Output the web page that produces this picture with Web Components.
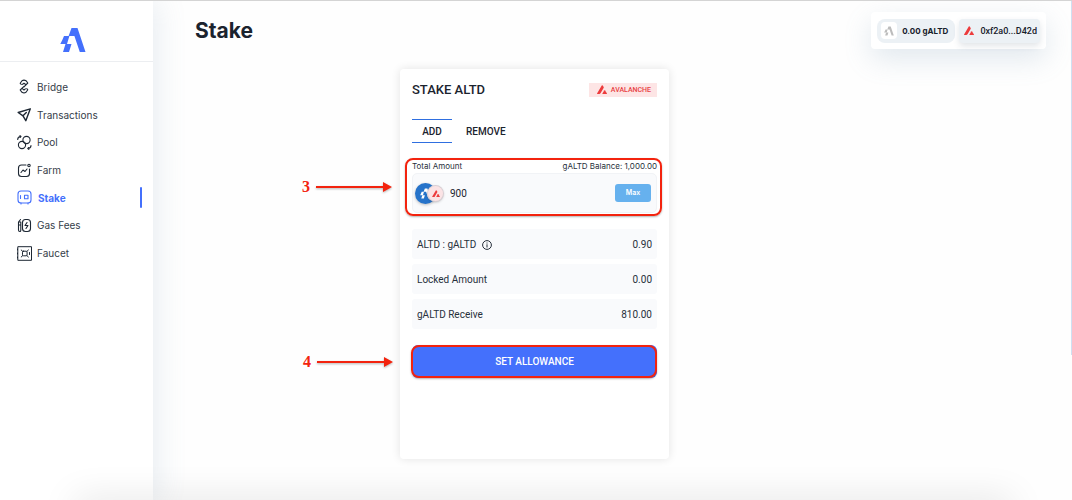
<!DOCTYPE html>
<html lang="en">
<head>
<meta charset="utf-8">
<meta name="viewport" content="width=device-width, initial-scale=1">
<title>Stake</title>
<style>
  html, body { margin: 0; background: #fefefe; }
  body { font-family: Inter, "Open Sans", sans-serif; color: #1b232e; }
</style>
</head>
<body>
<stake-app></stake-app>

<script>
const define = (name, html) => {
  const template = document.createElement('template');
  template.innerHTML = html;
  customElements.define(name, class extends HTMLElement {
    constructor() {
      super();
      this.attachShadow({ mode: 'open' }).append(template.content.cloneNode(true));
    }
  });
};

define('brand-mark', `
  <style>
    :host { display: block; width: 26px; height: 26px; color: #4470fc; }
    svg { display: block; width: 100%; height: 100%; }
  </style>
  <svg viewBox="0 0 26 26" fill="currentColor" aria-hidden="true">
    <path d="M11.500 1H17.500L25.500 25H19.800L14.400 9H8.600Z"/>
    <path d="M4 9H9.400L7 17H.3L2.300 13Z"/>
    <path d="M5.500 17H11.500L9 25H3Z"/>
  </svg>`);

define('avax-mark', `
  <style>
    :host { display: block; width: 10px; height: 9px; color: #ed3b3c; }
    svg { display: block; width: 100%; height: 100%; }
  </style>
  <svg viewBox="0 0 20 18" fill="currentColor" aria-hidden="true">
    <path d="M9.500 1Q10.500 0 11.500 1L13.300 4Q13.800 5 13.200 6L7 16.500Q6.200 18 4.500 18H1Q-.5 18 .4 16.500Z"/>
    <path d="M14.500 10.800Q15.300 9.700 16.100 10.800L19.700 16.700Q20.300 18 19 18H11.700Q10.300 18 11 16.700Z"/>
  </svg>`);

define('nav-item', `
  <style>
    :host { display: flex; flex: 1; }
    a { display: flex; flex: 1; align-items: center; gap: 5px; margin-right: 11px; padding-left: 17px;
        color: #353d49; font-size: 10px; line-height: 20px; text-decoration: none; }
    ::slotted(svg) { width: 15px; height: 15px; color: #1d2733; }
    :host([active]) a { color: #4470fc; font-weight: 700; gap: 6px; }
    :host([active]) ::slotted(svg) { color: #4470fc; }
    :host([active]) a::after { content: ""; width: 2px; height: 21px; margin-left: auto; background: #4470fc; border-radius: 1px; }
  </style>
  <a href="#"><slot name="icon"></slot><span><slot></slot></span></a>`);

define('side-bar', `
  <style>
    :host { display: block; background: #fff; box-shadow: 4px 0 28px rgba(110,145,175,.16); }
    .brand { display: flex; justify-content: center; padding: 26px 7px 8px 0; border-bottom: 1px solid #eceef1; }
    nav { display: flex; flex-direction: column; height: 194px; margin-top: 11px; }
    svg { fill: none; stroke: currentColor; stroke-width: 1.1; stroke-linecap: round; stroke-linejoin: round; }
  </style>
  <div class="brand"><brand-mark></brand-mark></div>
  <nav aria-label="Main">
    <nav-item>Bridge
      <svg slot="icon" viewBox="0 0 15 15"><path d="M4.300 5.500L3.200 4.300L5 1.700Q7 .5 9 1.700L10.800 4L7 7.800M5.600 5.300L7 4.200L8.400 5.300M7 7.300L3.200 11L5 13.300Q7 14.500 9 13.300L10.800 10.800L9.800 9.600M5.600 9.800L7 11L8.400 9.800"/></svg>
    </nav-item>
    <nav-item>Transactions
      <svg slot="icon" viewBox="0 0 15 15"><path stroke-width="1.400" d="M13.300 1.800L1.200 5.500L6 8.800L8.800 13.700Z M6 8.800L9.300 5.500"/></svg>
    </nav-item>
    <nav-item>Pool
      <svg slot="icon" viewBox="0 0 15 15"><circle cx="9.500" cy="5" r="3.600"/><circle cx="5" cy="10" r="3.600"/><path d="M.7 4.500Q.7 1.700 3.700 1.500M3 .7L4 1.500L3.200 2.500M14 10.500Q14 13.300 11 13.500M11.800 12.500L10.800 13.500L11.800 14.300"/></svg>
    </nav-item>
    <nav-item>Farm
      <svg slot="icon" viewBox="0 0 15 15"><path d="M9 2H4.500Q1.500 2 1.500 5V10.500Q1.500 13.500 4.500 13.500H9.500Q12.500 13.500 12.500 10.500V6M4 9.500L6 7L8 8.500L10 6"/><circle cx="12" cy="2.500" r="1.200"/></svg>
    </nav-item>
    <nav-item active>Stake
      <svg slot="icon" viewBox="0 0 15 15"><rect x="1" y="1" width="13" height="12" rx="3"/><path d="M3.500 5.500V8.500M4 13V14M11 13V14"/><rect x="7.500" y="5.300" width="3.500" height="3.500"/></svg>
    </nav-item>
    <nav-item>Gas Fees
      <svg slot="icon" viewBox="0 0 15 15"><rect x="5.500" y="1.500" width="8" height="12" rx="3"/><path d="M10 4.500L8 7.500H11L9 10.500M3.500 1.500L1.500 4V7H3.800V4H1.500M1.500 7V12Q1.500 13.500 2.700 13.500T3.800 12V7"/></svg>
    </nav-item>
    <nav-item>Faucet
      <svg slot="icon" viewBox="0 0 15 15"><g stroke-width="1"><rect x="1.200" y=".7" width="13.300" height="13.600"/><rect x="5.500" y="5.200" width="4.600" height="4.600" rx="1"/><path d="M.5 3V4M.5 7V8M.5 11V12M4.200 4L5.700 5.400M11.400 4L9.900 5.400M4.200 11L5.700 9.600M11.400 11L9.900 9.600M12.500 6.500V8.500"/></g></svg>
    </nav-item>
  </nav>`);

define('wallet-bar', `
  <style>
    :host { display: flex; align-items: center; gap: 4px; padding: 6px; box-sizing: border-box; height: 37px;
            background: #fff; border-radius: 4px; box-shadow: 0 10px 28px rgba(110,145,175,.2); }
    button { display: flex; align-items: center; box-sizing: border-box; height: 24px; border: 0; margin: 0;
             background: #ecf1f5; color: #17202b; line-height: 16px; white-space: nowrap; }
    .balance { gap: 5px; padding: 0 7px 0 4px; border-radius: 8px; font-family: Inter, sans-serif; font-size: 8px; font-weight: 700; }
    .tile { display: grid; place-items: center; width: 16px; height: 17px; background: #fff; border-radius: 4px; }
    .tile brand-mark { width: 10px; height: 10px; color: #bcbcbc; }
    .account { gap: 6px; padding: 0 3px 0 5px; border-radius: 4px; font-family: Roboto, sans-serif; font-size: 9px; font-weight: 500; box-shadow: 0 3px 6px rgba(60,80,100,.15); }
  </style>
  <button class="balance" type="button"><span class="tile"><brand-mark></brand-mark></span>0.00 gALTD</button>
  <button class="account" type="button"><avax-mark></avax-mark>0xf2a0...D42d</button>`);

define('info-row', `
  <style>
    :host { display: flex; align-items: center; justify-content: space-between; box-sizing: border-box; height: 30px; padding: 1px 5px 0;
            background: #f9fafc; border-radius: 3px; font: 400 10px/16px Roboto, sans-serif; color: #27303b; }
    .label { display: flex; align-items: center; gap: 6px; }
  </style>
  <span class="label"><slot></slot></span><span><slot name="value"></slot></span>`);

define('step-marker', `
  <style>
    :host { position: absolute; z-index: 1; border: 2px solid #f3230e; border-radius: 8px;
            box-shadow: 0 1px 2px rgba(0,0,0,.3); pointer-events: none; }
    .lead { position: absolute; right: calc(100% + var(--lead-gap, 15px)); top: 50%; transform: translateY(-50%);
            display: flex; align-items: center; gap: 6px; color: #f3230e;
            font: 700 16px/20px "Liberation Serif", serif; }
    svg { display: block; width: 76px; height: 10px; filter: drop-shadow(0 1px 1px rgba(0,0,0,.3)); }
  </style>
  <div class="lead"><slot></slot>
    <svg viewBox="0 0 76 10" fill="currentColor" aria-hidden="true"><path d="M0 4H67V0L76 5L67 10V6H0Z"/></svg>
  </div>`);

define('stake-card', `
  <style>
    :host { display: block; box-sizing: border-box; min-height: 390px; padding: 12px; background: #fff;
            border-radius: 4px; box-shadow: 0 0 10px rgba(0,0,0,.11); }
    header { display: flex; align-items: center; justify-content: space-between; height: 17px; }
    h2 { margin: 0; font: 500 13px/16px Roboto, sans-serif; }
    .chain { display: flex; align-items: center; gap: 4px; height: 14px; padding: 0 6px 0 8px; background: #fde5e5;
             color: #e84142; font: 500 7px/14px Roboto, sans-serif; }
    .tabs { display: flex; gap: 14px; height: 24px; margin-top: 21px; }
    .tabs button { padding: 1px 0 0; border: 0; background: none; color: #1b232e; font: 500 10px/16px Roboto, sans-serif; }
    .tabs .on { width: 40px; border: solid #2f6fe0; border-width: 1px 0; }
    .stake, .submit { position: relative; }
    .stake { margin-top: 16px; }
    .caption { display: flex; justify-content: space-between; font-size: 8px; line-height: 14px; color: #27303b; }
    .field { display: flex; align-items: center; box-sizing: border-box; height: 40px; padding: 0 5px 0 2px;
             background: #f9fafc; border: 1px solid #f1f3f6; border-radius: 5px; }
    .coins { display: flex; align-items: center; flex: none; }
    .coin { display: grid; place-items: center; width: 21px; height: 21px; border-radius: 50%; background: #2673ca; box-shadow: 0 1px 3px rgba(0,0,0,.25); }
    .coin brand-mark { width: 11px; height: 11px; color: #fff; }
    .coin + .coin { width: 15px; height: 15px; margin-left: -8px; background: #fbe3e5; box-shadow: 0 0 0 1px #d9cfd4, 0 1px 3px rgba(0,0,0,.3); }
    .coin avax-mark { width: 8px; height: 7px; }
    input { flex: 1; min-width: 0; margin: 0 7px; padding: 1px 0 0; border: 0; outline: 0; background: none;
            color: #1b232e; font: 400 10px/16px Roboto, sans-serif; }
    .max { width: 36px; height: 18px; padding: 0; border: 0; border-radius: 3px; background: #66b1ee; color: #fff; font: 600 7px/16px Inter, sans-serif; }
    .rows { display: grid; gap: 5px; margin-top: 16px; }
    .rows svg { width: 10px; height: 10px; fill: none; stroke: #27303b; }
    .submit { margin-top: 16px; }
    .primary { display: block; width: 100%; height: 33px; padding: 0; border: 0; border-radius: 6px; background: #4470fc;
               color: #fff; font: 500 10px/16px Roboto, sans-serif; }
    .stake step-marker { inset: -1px -5px -3px -7px; }
    .submit step-marker { inset: 0 0 0 -1px; --lead-gap: 20px; }
  </style>
  <header>
    <h2>STAKE ALTD</h2>
    <span class="chain"><avax-mark></avax-mark>AVALANCHE</span>
  </header>
  <div class="tabs" role="tablist">
    <button class="on" type="button" role="tab" aria-selected="true">ADD</button>
    <button type="button" role="tab" aria-selected="false">REMOVE</button>
  </div>
  <div class="stake">
    <div class="caption"><label for="amount">Total Amount</label><span>gALTD Balance: 1,000.00</span></div>
    <div class="field">
      <span class="coins"><span class="coin"><brand-mark></brand-mark></span><span class="coin"><avax-mark></avax-mark></span></span>
      <input id="amount" type="text" inputmode="decimal" value="900">
      <button class="max" type="button">Max</button>
    </div>
    <step-marker>3</step-marker>
  </div>
  <div class="rows">
    <info-row>ALTD : gALTD
      <svg viewBox="0 0 10 10" aria-hidden="true"><circle cx="5" cy="5" r="4.400"/><path d="M5 4.300V7.500M5 2.500V3.500"/></svg>
      <span slot="value">0.90</span></info-row>
    <info-row>Locked Amount<span slot="value">0.00</span></info-row>
    <info-row>gALTD Receive<span slot="value">810.00</span></info-row>
  </div>
  <div class="submit">
    <button class="primary" type="button">SET ALLOWANCE</button>
    <step-marker>4</step-marker>
  </div>`);

define('stake-app', `
  <style>
    :host { position: relative; display: grid; grid-template-columns: 153px minmax(0, 1fr); box-sizing: border-box;
            min-height: 100vh; border-top: 1px solid #d4d4d4; overflow: hidden; }
    :host::before { content: ""; position: absolute; z-index: 2; top: 0; right: 0; width: 1px; height: 71%; background: #cfe0f2; }
    :host::after { content: ""; position: absolute; z-index: 2; left: 75px; right: 60px; bottom: -20px; height: 20px;
                   box-shadow: 0 0 36px rgba(0,0,0,.13); pointer-events: none; }
    side-bar { position: relative; z-index: 1; }
    .top { display: flex; justify-content: space-between; align-items: flex-start; height: 57px; padding: 11px 26px 0 42px; }
    h1 { margin: 4px 0 0; font-size: 21px; line-height: 30px; font-weight: 700; }
    .content { display: grid; grid-template-columns: 38fr 269px 62fr; }
    stake-card { grid-column: 2; }
  </style>
  <side-bar></side-bar>
  <main>
    <div class="top"><h1>Stake</h1><wallet-bar></wallet-bar></div>
    <div class="content"><stake-card></stake-card></div>
  </main>`);
</script>
</body>
</html>
